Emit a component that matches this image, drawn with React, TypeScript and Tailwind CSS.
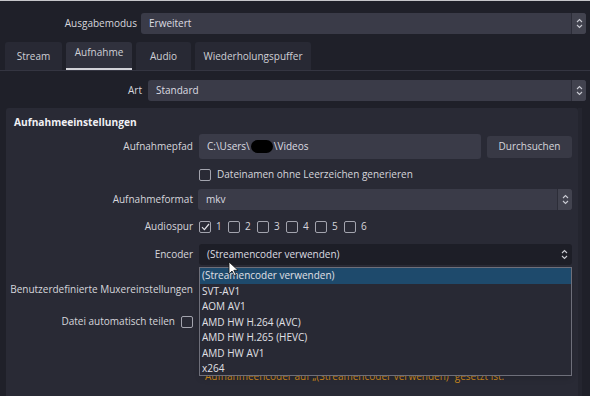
import React from 'react';

const Spinner: React.FC<{ boxed?: boolean }> = ({ boxed }) => (
  <div className={`w-[15px] h-full flex items-center justify-center ${boxed ? 'bg-[#42434f] border-l border-[#2c2d38]' : ''}`}>
    <svg width="7" height="11" viewBox="0 0 7 11" fill="none" stroke="#c9cad2" strokeWidth="1.1">
      <path d="M1 4 L3.5 1.5 L6 4" />
      <path d="M1 7 L3.5 9.5 L6 7" />
    </svg>
  </div>
);

const Combo: React.FC<{ value: string; dark?: boolean; boxed?: boolean; className?: string }> = ({ value, dark, boxed, className }) => (
  <div className={`flex items-center h-[21px] rounded-[3px] overflow-hidden ${dark ? 'bg-[#1d1e27]' : 'bg-[#3a3b48]'} ${className ?? ''}`}>
    <span className="flex-1 pl-[8px] text-[#dcdce2] truncate">{value}</span>
    <Spinner boxed={boxed} />
  </div>
);

const Check: React.FC<{ checked?: boolean }> = ({ checked }) => (
  <div className="w-[12px] h-[12px] border border-[#a3a4ae] rounded-[2px] flex items-center justify-center shrink-0">
    {checked && (
      <svg width="9" height="8" viewBox="0 0 9 8" fill="none" stroke="#e2e2e8" strokeWidth="1.2">
        <path d="M1 4.2 L3.4 6.6 L8 1" />
      </svg>
    )}
  </div>
);

const Label: React.FC<{ children: React.ReactNode }> = ({ children }) => (
  <div className="w-[187px] shrink-0 text-right text-[#d6d6dc] whitespace-nowrap">{children}</div>
);

const tabs = ['Stream', 'Aufnahme', 'Audio', 'Wiederholungspuffer'];
const encoders = [
  '(Streamencoder verwenden)',
  'SVT-AV1',
  'AOM AV1',
  'AMD HW H.264 (AVC)',
  'AMD HW H.265 (HEVC)',
  'AMD HW AV1',
  'x264',
];

export default function App() {
  return (
    <div
      className="relative w-[590px] h-[396px] overflow-hidden bg-[#1f2029] border-t border-[#c6c6ca] text-[10px] leading-[15px]"
      style={{ fontFamily: '"Open Sans", "Noto Sans", sans-serif' }}
    >
      {/* Ausgabemodus */}
      <div className="flex items-center pt-[12px] pr-[4px]">
        <div className="w-[137px] text-right text-[#d6d6dc]">Ausgabemodus</div>
        <Combo value="Erweitert" boxed className="flex-1 ml-[4px]" />
      </div>

      {/* Tabs */}
      <div className="flex gap-[4px] pl-[5px] mt-[8px] pr-[4px] border-b border-[#343541]">
        {tabs.map((t) => (
          <div
            key={t}
            className={`h-[28px] flex items-center justify-center rounded-t-[3px] text-[#cfd0d6] ${
              t === 'Aufnahme' ? 'bg-[#30313d] pb-[5px] border-b-2 border-[#d2d2d8] w-[66px]' : 'bg-[#282934]'
            } ${t === 'Stream' ? 'w-[57px]' : ''} ${t === 'Audio' ? 'w-[55px]' : ''} ${t === 'Wiederholungspuffer' ? 'w-[116px]' : ''}`}
          >
            {t}
          </div>
        ))}
      </div>

      {/* Art */}
      <div className="flex items-center mt-[9px] pr-[4px]">
        <div className="w-[142px] text-right text-[#d6d6dc]">Art</div>
        <Combo value="Standard" boxed className="flex-1 ml-[6px]" />
      </div>

      {/* Group box */}
      <div className="flex mt-[7px]">
        <div className="ml-[6px] w-[572px] h-[300px] bg-[#292a35] rounded-t-[3px] pt-[7px] pr-[6px]">
          <div className="pl-[8px] font-bold text-[#f0f0f4] text-[10.2px]">Aufnahmeeinstellungen</div>

          <div className="flex items-center gap-[6px] mt-[4px]">
            <Label>Aufnahmepfad</Label>
            <div className="w-[282px] h-[25px] bg-[#3a3b48] rounded-[3px] flex items-center pl-[8px] text-[#dcdce2]">
              C:\Users\
              <span className="inline-block w-[22px] h-[13px] bg-black rounded-full mx-[1px]" />
              \Videos
            </div>
            <div className="flex-1 h-[22px] bg-[#383945] rounded-[3px] flex items-center justify-center text-[#d6d6dc]">
              Durchsuchen
            </div>
          </div>

          <div className="flex items-center gap-[6px] mt-[8px] pl-[193px]">
            <Check />
            <span className="text-[#d6d6dc]">Dateinamen ohne Leerzeichen generieren</span>
          </div>

          <div className="flex items-center gap-[5px] mt-[7px]">
            <Label>Aufnahmeformat</Label>
            <Combo value="mkv" boxed className="flex-1" />
          </div>

          <div className="flex items-center gap-[6px] mt-[9px]">
            <Label>Audiospur</Label>
            <div className="flex items-center">
              {[1, 2, 3, 4, 5, 6].map((n) => (
                <div key={n} className="flex items-center w-[29px]">
                  <Check checked={n === 1} />
                  <span className="ml-[5px] text-[#d6d6dc]">{n}</span>
                </div>
              ))}
            </div>
          </div>

          <div className="flex items-center gap-[6px] mt-[10px]">
            <Label>Encoder</Label>
            <Combo value="(Streamencoder verwenden)" dark className="flex-1" />
          </div>

          <div className="flex items-center gap-[6px] mt-[17px]">
            <Label>Benutzerdefinierte Muxereinstellungen</Label>
          </div>

          <div className="flex items-center justify-end w-[187px] gap-[6px] mt-[17px]">
            <span className="text-[#d6d6dc]">Datei automatisch teilen</span>
            <Check />
          </div>

          <div className="pl-[199px] mt-[40px] text-[#d08a1c] whitespace-nowrap">
            Aufnahmeencoder auf „(Streamencoder verwenden)“ gesetzt ist.
          </div>
        </div>
        <div className="w-[4px] bg-[#24252f]" />
      </div>

      {/* Encoder dropdown */}
      <div className="absolute left-[199px] top-[266px] w-[373px] h-[109px] bg-[#282934] border border-[#6e6f7a] shadow-md">
        {encoders.map((e, i) => (
          <div
            key={e}
            className={`h-[15.5px] leading-[15.5px] pl-[2px] text-[#e0e0e6] ${i === 0 ? 'bg-[#1e4a6c]' : ''}`}
          >
            {e}
          </div>
        ))}
      </div>

      {/* Mouse cursor */}
      <svg className="absolute left-[228px] top-[260px]" width="11" height="16" viewBox="0 0 11 16">
        <path d="M1 1 L1 13 L4 10 L6.5 15 L8.2 14.2 L5.8 9.3 L10 9.3 Z" fill="#ffffff" stroke="#111" strokeWidth="0.8" />
      </svg>
    </div>
  );
}
